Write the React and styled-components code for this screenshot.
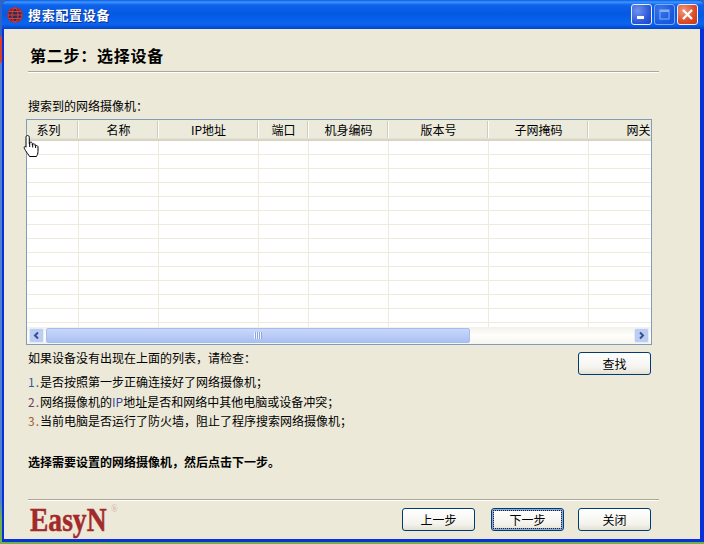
import React from "react";
import styled, { createGlobalStyle } from "styled-components";

const GlobalStyle = createGlobalStyle`
  html, body {
    margin: 0;
    padding: 0;
    width: 704px;
    height: 544px;
    overflow: hidden;
  }
  body {
    background: linear-gradient(180deg, #2f63c4 0, #2f63c4 36px, #d8402a 37px, #d8402a 62px, #4f7fd0 63px, #4f7fd0 500px, #6fb04a 520px, #6fb04a 100%);
    font-family: "Noto Sans CJK SC", "Liberation Sans", sans-serif;
    font-size: 12px;
    color: #000;
  }
`;

const Desktop = styled.div`
  position: relative;
  width: 704px;
  height: 544px;
  padding-left: 2px;
  box-sizing: border-box;
`;

const Window = styled.div`
  display: flex;
  flex-direction: column;
  width: 702px;
  height: 542px;
  background: #0831d9;
  border-radius: 7px 7px 0 0;
  overflow: hidden;
`;

const TitleBar = styled.div`
  display: flex;
  align-items: center;
  height: 29px;
  flex: none;
  padding: 0 6px 0 5px;
  background: linear-gradient(180deg, #0a5be0 0, #3d95ff 2px, #0f62ea 5px, #0459e2 14px, #0a65f0 24px, #0342c8 29px);
`;

const TitleText = styled.div`
  margin-left: 5px;
  flex: 1;
  color: #fff;
  font-size: 13px;
  font-weight: 700;
  letter-spacing: 0.7px;
  line-height: 16px;
  text-shadow: 1px 1px 0 #0f2f90;
`;

const WinButtons = styled.div`
  display: flex;
  gap: 2px;
`;

const WinButton = styled.div`
  display: flex;
  align-items: center;
  justify-content: center;
  width: 21px;
  height: 21px;
  box-sizing: border-box;
  border: 1px solid #e8eefc;
  border-radius: 3px;
  background: ${(p) => (p.$close
    ? "radial-gradient(circle at 30% 30%, #f09a7c, #dd4a26 60%, #c23a18)"
    : "radial-gradient(circle at 30% 30%, #6f93ee, #2a56d8 65%, #1c44c0)")};
  opacity: ${(p) => (p.$dim ? 0.5 : 1)};
`;

const Body = styled.div`
  flex: 1;
  display: flex;
  flex-direction: column;
  margin: 0 4px 3px 2px;
  padding: 0 40px 0 24px;
  background: #ece9d8;
`;

const Heading = styled.h1`
  margin: 15px 0 0 2px;
  font-size: 16px;
  font-weight: 700;
  letter-spacing: 0.75px;
  line-height: 22px;
`;

const Rule = styled.div`
  flex: none;
  width: 631px;
  height: 1px;
  background: #aca899;
  box-shadow: 0 1px 0 #fff;
`;

const HeadRule = styled(Rule)`
  margin-top: 5px;
`;

const Label = styled.div`
  margin-top: 26px;
  height: 16px;
  line-height: 16px;
  white-space: nowrap;
`;

const Grid = styled.div`
  flex: none;
  display: flex;
  flex-direction: column;
  width: 626px;
  height: 226px;
  margin: 5px 0 0 -2px;
  box-sizing: border-box;
  border: 1px solid #7f9db9;
  background: #fff;
  overflow: hidden;
`;

const HeaderRow = styled.div`
  display: flex;
  flex: none;
  height: 21px;
  background: #ebeadb;
  box-shadow: inset 0 -1px 0 #d6d2c2, inset 0 -2px 0 #dcd8c9, inset 0 -3px 0 #e4e1d2;
`;

const HeaderCell = styled.div`
  flex: none;
  box-sizing: border-box;
  width: ${(p) => p.$w}px;
  height: 17px;
  margin-top: 1px;
  padding-right: ${(p) => p.$shift || 0}px;
  text-align: center;
  line-height: 18px;
  white-space: nowrap;
  border-right: 1px solid #fff;
  box-shadow: inset -1px 0 0 #cfcbbc;
`;

const Rows = styled.div`
  flex: 1;
  min-height: 0;
  overflow: hidden;
`;

const Row = styled.div`
  display: flex;
  height: 14px;
  box-sizing: border-box;
  border-bottom: 1px solid #eeebdc;
`;

const Cell = styled.div`
  flex: none;
  box-sizing: border-box;
  width: ${(p) => p.$w}px;
  border-right: 1px solid #eeebdc;
`;

const ScrollBar = styled.div`
  display: flex;
  align-items: center;
  flex: none;
  height: 17px;
  padding: 0 2px;
  background: linear-gradient(180deg, #f3f1ea, #fefefb 50%, #f6f4ee);
`;

const ScrollArrow = styled.div`
  display: flex;
  align-items: center;
  justify-content: center;
  flex: none;
  width: 15px;
  height: 15px;
  box-sizing: border-box;
  border: 1px solid #e4ecfb;
  border-radius: 2px;
  background: #bccdf4;
`;

const Thumb = styled.div`
  display: flex;
  align-items: center;
  justify-content: center;
  flex: none;
  width: 424px;
  height: 15px;
  margin-left: 2px;
  box-sizing: border-box;
  border: 1px solid #a8bde8;
  border-radius: 2px;
  background: linear-gradient(180deg, #c8d8fa, #b7caf7 60%, #aabff2);
`;

const Grip = styled.div`
  width: 8px;
  height: 7px;
  background: repeating-linear-gradient(90deg, #eef3fe 0, #eef3fe 1px, #8ca6e4 1px, #8ca6e4 2px);
`;

const Spacer = styled.div`
  flex: 1;
`;

const Help = styled.div`
  display: flex;
  justify-content: space-between;
  align-items: flex-start;
  width: 623px;
  margin-top: 7px;
`;

const HelpText = styled.div`
  display: flex;
  flex-direction: column;
  margin-top: -2px;
`;

const HelpTitle = styled.div`
  line-height: 16px;
  margin-bottom: 6px;
  white-space: nowrap;
`;

const Step = styled.div`
  height: 19.5px;
  line-height: 20px;
  white-space: nowrap;
`;

const Num = styled.span`
  color: ${(p) => p.$c};
  letter-spacing: 1px;
`;

const Ip = styled.span`
  color: #3a4aa0;
`;

const Notice = styled.div`
  margin-top: 23.5px;
  font-weight: 700;
  line-height: 16px;
  white-space: nowrap;
`;

const FootRule = styled(Rule)`
  margin-top: 29px;
`;

const Footer = styled.div`
  display: flex;
  align-items: flex-start;
  justify-content: space-between;
  width: 623px;
  margin-top: 8px;
`;

const Logo = styled.div`
  position: relative;
  height: 24px;
  margin-left: 2px;
  color: #a32a2a;
  font-family: "Liberation Serif", serif;
  font-size: 34px;
  font-weight: 700;
  line-height: 24px;
  -webkit-text-stroke: 0.5px #a32a2a;
  transform: scaleX(0.81);
  transform-origin: left top;
`;

const Reg = styled.span`
  position: absolute;
  top: -5px;
  right: -14px;
  color: #d8b0a8;
  font-size: 11px;
  font-weight: 400;
  line-height: 11px;
  -webkit-text-stroke: 0;
`;

const FooterButtons = styled.div`
  display: flex;
  gap: 15px;
`;

const Button = styled.button`
  width: 73px;
  height: 23px;
  margin: ${(p) => (p.$focus ? "0 -1px 0 1px" : "0")};
  padding: 0;
  box-sizing: border-box;
  border: 1px solid #003c74;
  border-radius: 3px;
  background: linear-gradient(180deg, #fff, #f4f3ee 70%, #e4e0d2);
  font: inherit;
  color: #000;
  outline: ${(p) => (p.$focus ? "1px dotted #222" : "none")};
  outline-offset: -3px;
  box-shadow: ${(p) => (p.$focus ? "inset 0 0 0 2px #8aa6de" : "none")};
`;

const HandCursor = styled.svg`
  position: absolute;
  left: 23px;
  top: 134px;
`;

const columns = [
  { title: "系列", w: 52, shift: 8 },
  { title: "名称", w: 80 },
  { title: "IP地址", w: 100 },
  { title: "端口", w: 50 },
  { title: "机身编码", w: 80 },
  { title: "版本号", w: 100 },
  { title: "子网掩码", w: 100 },
  { title: "网关", w: 100 },
];

const rowCount = 14;

function AppIcon() {
  return (
    <svg width="16" height="16" viewBox="0 0 16 16" fill="none">
      <circle cx="8" cy="8" r="7" stroke="#c8261c" strokeWidth="1.6" fill="#3a2a50" />
      <ellipse cx="8" cy="8" rx="3" ry="7" stroke="#d8443a" />
      <path d="M1 8h14M2 4.500h12M2 11.500h12" stroke="#d8443a" />
    </svg>
  );
}

function DataGrid() {
  return (
    <Grid>
      <HeaderRow>
        {columns.map((c) => (
          <HeaderCell key={c.title} $w={c.w} $shift={c.shift}>{c.title}</HeaderCell>
        ))}
      </HeaderRow>
      <Rows>
        {Array.from({ length: rowCount }).map((_, i) => (
          <Row key={i}>
            {columns.map((c) => <Cell key={c.title} $w={c.w} />)}
          </Row>
        ))}
      </Rows>
      <ScrollBar>
        <ScrollArrow>
          <svg width="9" height="9" viewBox="0 0 9 9" fill="none">
            <path d="M6 1.500 3 4.500 6 7.500" stroke="#34508f" strokeWidth="2" />
          </svg>
        </ScrollArrow>
        <Thumb><Grip /></Thumb>
        <Spacer />
        <ScrollArrow>
          <svg width="9" height="9" viewBox="0 0 9 9" fill="none">
            <path d="M3 1.500 6 4.500 3 7.500" stroke="#34508f" strokeWidth="2" />
          </svg>
        </ScrollArrow>
      </ScrollBar>
    </Grid>
  );
}

export default function App() {
  return (
    <Desktop>
      <GlobalStyle />
      <Window>
        <TitleBar>
          <AppIcon />
          <TitleText>搜索配置设备</TitleText>
          <WinButtons>
            <WinButton>
              <svg width="13" height="13" viewBox="0 0 13 13"><rect x="2" y="8" width="7" height="3" fill="#fff" /></svg>
            </WinButton>
            <WinButton $dim>
              <svg width="13" height="13" viewBox="0 0 13 13" fill="none">
                <rect x="2" y="2" width="9" height="9" stroke="#fff" />
                <rect x="2" y="2" width="9" height="2" fill="#fff" />
              </svg>
            </WinButton>
            <WinButton $close>
              <svg width="13" height="13" viewBox="0 0 13 13">
                <path d="M2 2 11 11M11 2 2 11" stroke="#fff" strokeWidth="2.4" />
              </svg>
            </WinButton>
          </WinButtons>
        </TitleBar>
        <Body>
          <Heading>第二步：选择设备</Heading>
          <HeadRule />
          <Label>搜索到的网络摄像机：</Label>
          <DataGrid />
          <Help>
            <HelpText>
              <HelpTitle>如果设备没有出现在上面的列表，请检查：</HelpTitle>
              <Step><Num $c="#3a5a90">1.</Num>是否按照第一步正确连接好了网络摄像机；</Step>
              <Step><Num $c="#70406a">2.</Num>网络摄像机的<Ip>IP</Ip>地址是否和网络中其他电脑或设备冲突；</Step>
              <Step><Num $c="#a06030">3.</Num>当前电脑是否运行了防火墙，阻止了程序搜索网络摄像机；</Step>
              <Notice>选择需要设置的网络摄像机，然后点击下一步。</Notice>
            </HelpText>
            <Button>查找</Button>
          </Help>
          <FootRule />
          <Footer>
            <Logo>EasyN<Reg>®</Reg></Logo>
            <FooterButtons>
              <Button>上一步</Button>
              <Button $focus>下一步</Button>
              <Button>关闭</Button>
            </FooterButtons>
          </Footer>
        </Body>
      </Window>
      <HandCursor width="18" height="25" viewBox="0 0 18 25">
        <path
          d="M4.500 1.500c1 0 1.800.8 1.800 1.800V10h.4V8.500c1.600-.8 2.600 0 2.600 1V11h.4v-1c1.600-.6 2.500.2 2.500 1.200V12h.4v-.4c1.400-.4 2.400.3 2.400 1.400v4.500c0 2.200-.8 3.500-1.500 5H6.500c-1-2-2.500-3.500-4-6-.8-1.400-1.500-2.600-1.300-3.300.3-.9 1.400-.8 1.800 0V3.300c0-1 .5-1.800 1.500-1.800Z"
          fill="#fff"
          stroke="#000"
        />
        <path d="M6.700 10v3M9.700 11v2.500M12.600 12v2" stroke="#000" fill="none" />
      </HandCursor>
    </Desktop>
  );
}
